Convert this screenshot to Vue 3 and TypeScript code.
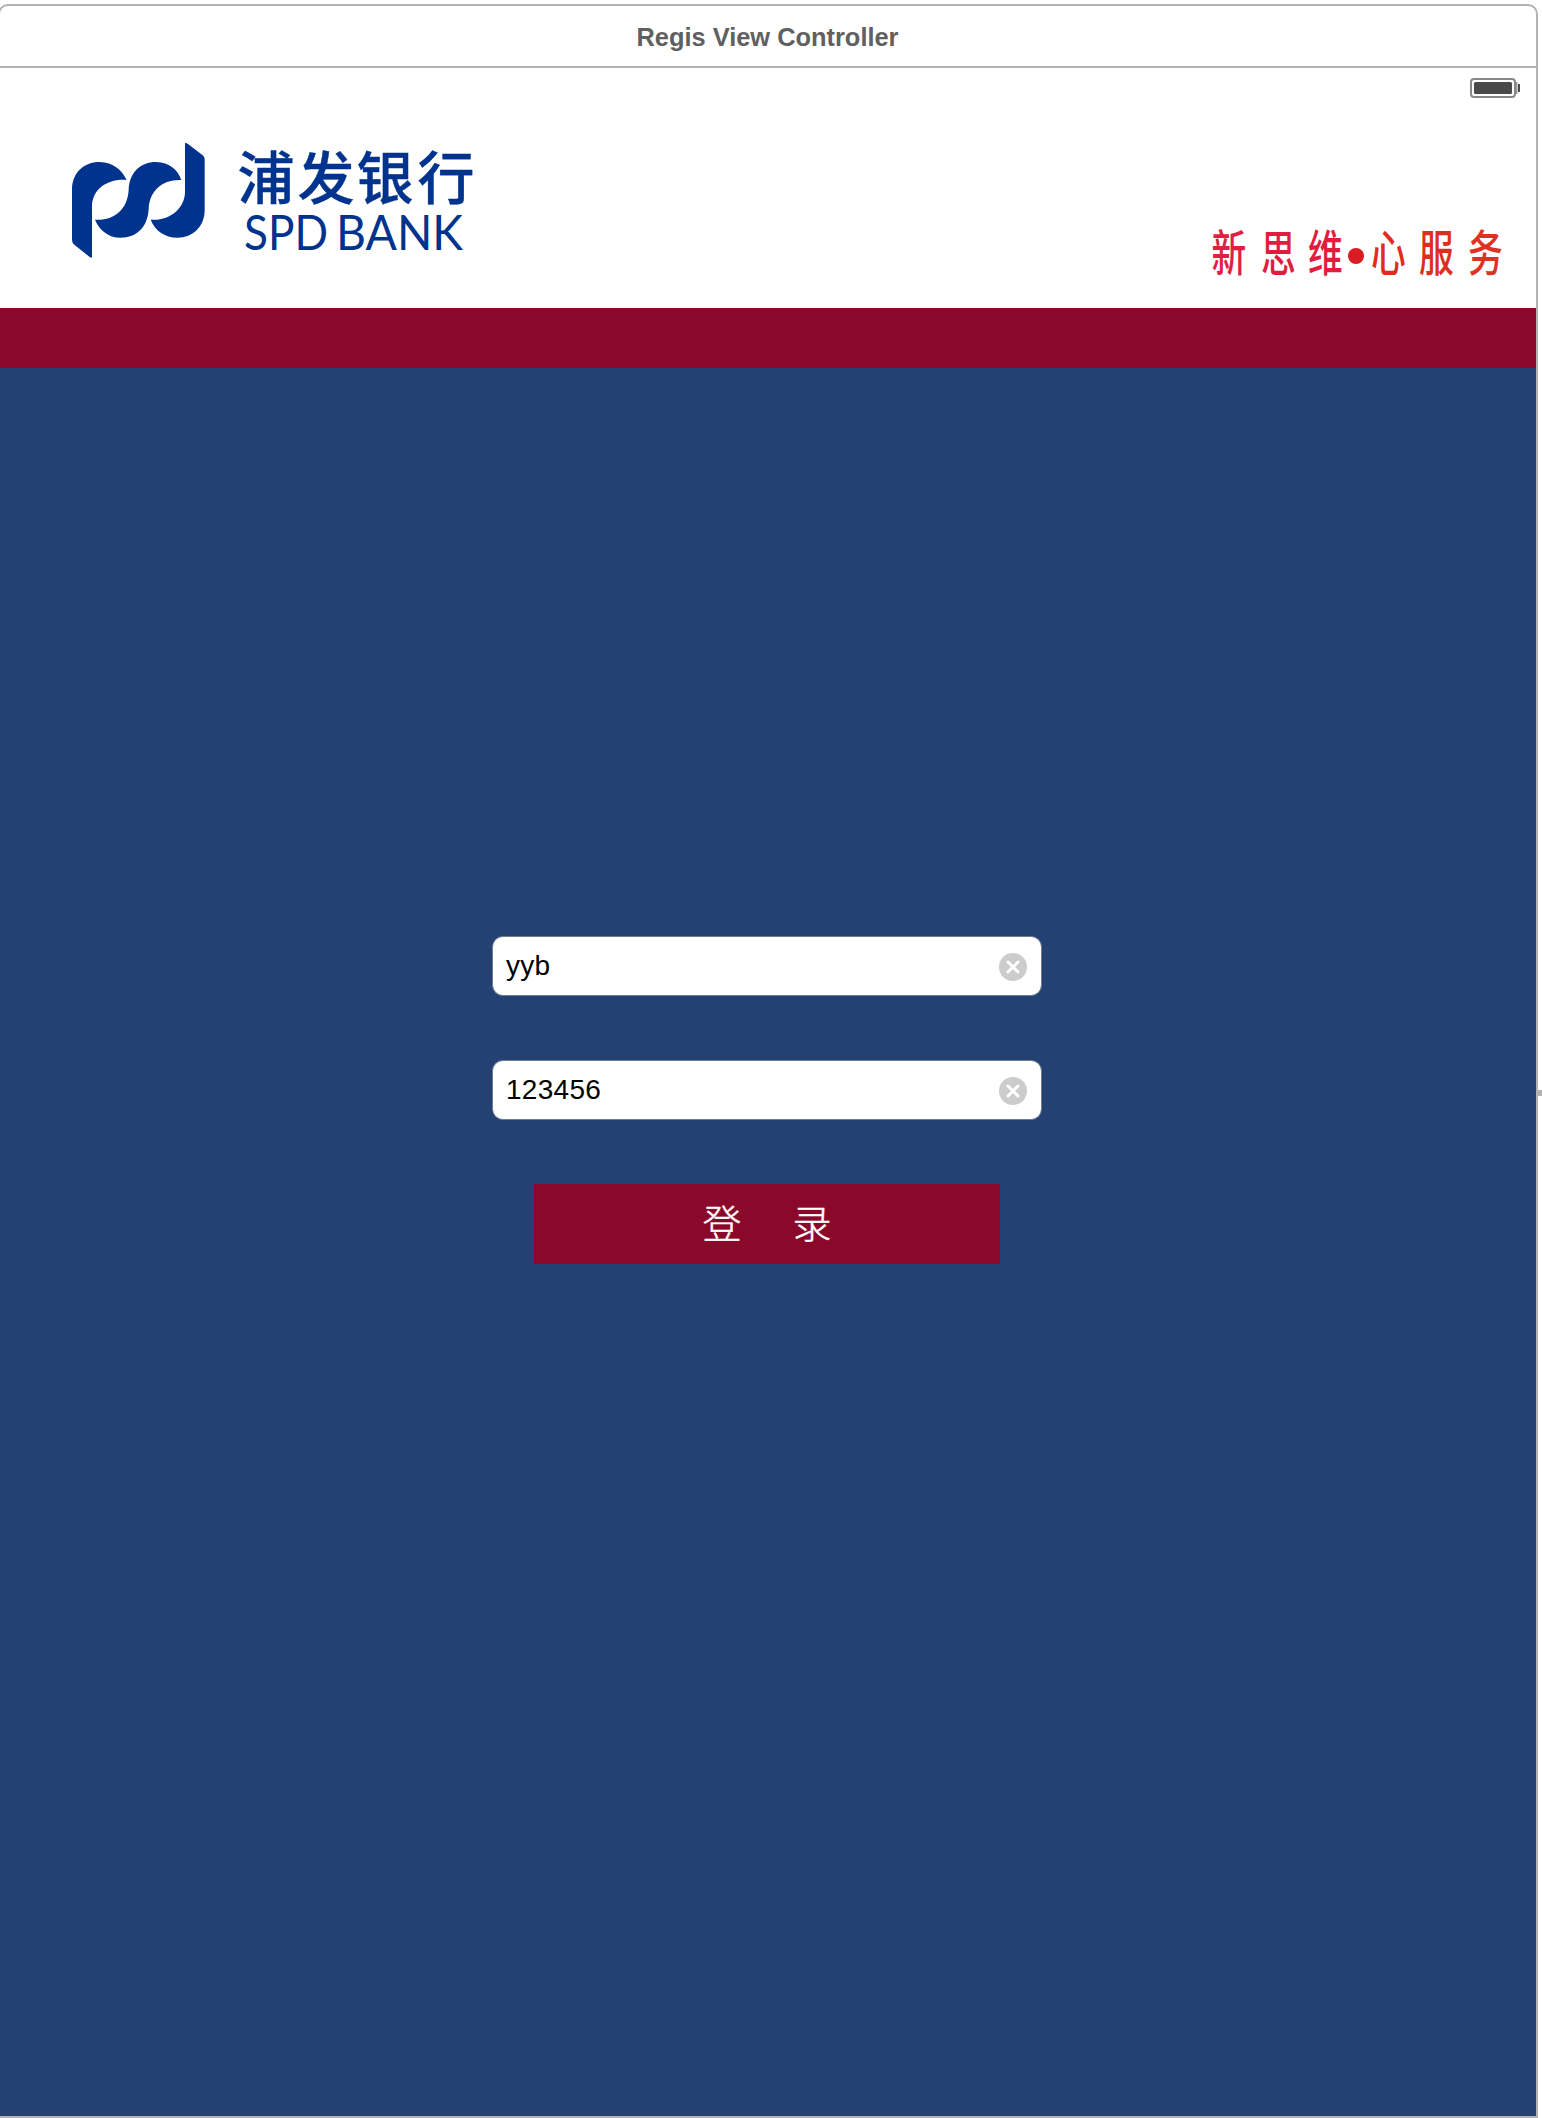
<script setup lang="ts">
import { ref } from 'vue'

interface Glyph {
  char: string
  x: number
  color: string
}

const account = ref('yyb')
const password = ref('123456')

const brandGlyphs: Glyph[] = [
  { char: '浦', x: 237.5, color: '#00338d' },
  { char: '发', x: 297.5, color: '#00338d' },
  { char: '银', x: 356.5, color: '#00338d' },
  { char: '行', x: 417.5, color: '#00338d' },
]

const sloganGlyphs: Glyph[] = [
  { char: '新', x: 21.5, color: '#e01f43' },
  { char: '思', x: 71, color: '#e01d40' },
  { char: '维', x: 118, color: '#e01d3c' },
  { char: '心', x: 181, color: '#de2c22' },
  { char: '服', x: 229, color: '#de2e22' },
  { char: '务', x: 278, color: '#de3222' },
]
</script>

<template>
  <div class="stage">
    <div class="scene">
      <div class="title-bar">
        <svg width="300" height="60" viewBox="0 0 300 60">
          <text class="title" x="18.5" y="39.7" textLength="262" lengthAdjust="spacingAndGlyphs">Regis View Controller</text>
        </svg>
      </div>
      <header class="header">
        <svg class="brand" width="490" height="240" viewBox="0 68 490 240">
          <g transform="translate(50 120) scale(.33333)" fill="#00338d">
            <path d="M66 207C67 158 101 126 149 126C190 126 216 151 230 180C174 175 126 207 126 260V411Q124 415 119 411L73 374Q66 368 66 360Z" />
            <path d="M135 299C188 303 232 273 236 210C238 157 271 126 318 126C359 126 384 151 394 180C335 178 299 213 296 267C293 321 261 353 212 353C174 353 148 330 135 299Z" />
            <path d="M302 299C358 304 405 265 405 216V70Q408 67 413 71L458 106Q464 111 464 118V270C464 319 429 353 382 353C344 353 314 331 302 299Z" />
          </g>
          <text v-for="g in brandGlyphs" :key="g.char" class="brand-cn" :x="g.x" y="198.8" :fill="g.color">{{ g.char }}</text>
          <text class="brand-en" x="244" y="249.5" textLength="84" lengthAdjust="spacingAndGlyphs">SPD</text>
          <text class="brand-en" x="336" y="249.5" textLength="127" lengthAdjust="spacingAndGlyphs">BANK</text>
        </svg>
        <div class="header-side">
          <svg class="battery" width="52" height="22" viewBox="0 0 52 22">
            <rect x="2" y="2" width="44" height="18" rx="3" fill="#fff" stroke="#888" stroke-width="2" />
            <rect x="5" y="5" width="38" height="12" rx="1.5" fill="#4a4a4a" />
            <path d="M47 5H48.5V17H47Z" fill="#999" />
            <path d="M49 7H50Q51 7 51 8V14Q51 15 50 15H49Z" fill="#4a4a4a" />
          </svg>
          <svg width="346" height="90" viewBox="0 0 346 90">
            <text
              v-for="g in sloganGlyphs"
              :key="g.char"
              class="slogan"
              :transform="`translate(${g.x} 61) scale(.71 1)`"
              :fill="g.color"
            >{{ g.char }}</text>
            <circle cx="166" cy="46" r="8" fill="#da1b22" />
          </svg>
        </div>
      </header>
      <div class="band"></div>
      <main class="content">
        <form class="form" @submit.prevent>
          <label class="field">
            <input v-model="account" type="text" aria-label="account" />
            <svg width="28" height="28" viewBox="0 0 28 28" @click="account = ''">
              <circle cx="14" cy="14" r="14" fill="#ccc" />
              <path d="M9 9L19 19M19 9L9 19" stroke="#fff" stroke-width="3" stroke-linecap="round" />
            </svg>
          </label>
          <label class="field">
            <input v-model="password" type="text" aria-label="password" />
            <svg width="28" height="28" viewBox="0 0 28 28" @click="password = ''">
              <circle cx="14" cy="14" r="14" fill="#ccc" />
              <path d="M9 9L19 19M19 9L9 19" stroke="#fff" stroke-width="3" stroke-linecap="round" />
            </svg>
          </label>
          <button class="login" type="submit"><span>登</span><span>录</span></button>
        </form>
      </main>
    </div>
    <div class="handle"></div>
  </div>
</template>

<style>
body {
  background: #fff;
}
</style>

<style scoped>
.stage {
  display: flex;
  align-items: flex-start;
  box-sizing: border-box;
  width: 1542px;
  height: 2118px;
  padding-top: 4px;
  overflow: hidden;
  background: #fff;
}
.scene {
  display: flex;
  flex-direction: column;
  box-sizing: border-box;
  flex: 0 0 1540px;
  width: 1540px;
  height: 2114px;
  margin-left: -2px;
  border: 2px solid #b3b3b3;
  border-radius: 10px 10px 0 0;
  overflow: hidden;
}
.title-bar {
  display: flex;
  justify-content: center;
  box-sizing: border-box;
  height: 62px;
  flex: none;
  border-bottom: 2px solid #b3b3b3;
}
.title {
  font: bold 25px "Liberation Sans", Arial, sans-serif;
  fill: #606060;
}
.header {
  display: flex;
  justify-content: space-between;
  height: 240px;
  flex: none;
}
.header-side {
  display: flex;
  flex-direction: column;
  align-items: flex-end;
  padding-top: 9px;
}
.battery {
  margin: 0 15px 111px 0;
}
.brand-cn {
  font: 500 57px "Noto Sans CJK SC", sans-serif;
  stroke: #00338d;
  stroke-width: 0.4px;
}
.brand-en {
  font: 400 49px Lato, sans-serif;
  fill: #00338d;
}
.slogan {
  font: 500 49px "Noto Sans CJK SC", sans-serif;
}
.band {
  height: 60px;
  flex: none;
  background: #8a0829;
}
.content {
  flex: 1;
  background: #234172;
}
.form {
  display: flex;
  flex-direction: column;
  align-items: center;
  padding-top: 568px;
}
.field {
  display: flex;
  align-items: center;
  box-sizing: border-box;
  width: 550px;
  height: 60px;
  margin: 0 2px 64px 0;
  padding: 0 14px 0 13px;
  border: 1px solid #707b91;
  border-radius: 11px;
  background: #fff;
}
.field input {
  flex: 1;
  min-width: 0;
  height: 40px;
  padding: 0;
  border: 0;
  outline: 0;
  background: transparent;
  color: #000;
  font: 28px "Liberation Sans", Arial, sans-serif;
  letter-spacing: 0.3px;
}
.field svg {
  margin-top: 2px;
}
.login {
  display: flex;
  justify-content: center;
  align-items: center;
  gap: 51px;
  width: 466px;
  height: 80px;
  margin: 0 2px 0 0;
  padding: 0 0 6px;
  border: 0;
  background: #8a0829;
  color: #fff;
  font: 300 39px "Noto Sans CJK SC", sans-serif;
  -webkit-text-stroke: 0.4px #fff;
}
.handle {
  width: 4px;
  height: 6px;
  margin-top: 1086px;
  background: #b3b3b3;
}
</style>
